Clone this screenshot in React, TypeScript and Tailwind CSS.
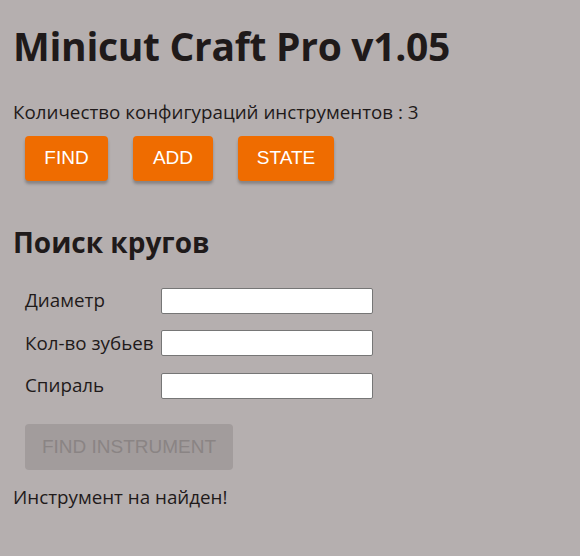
const fields = ["Диаметр", "Кол-во зубьев", "Спираль"];

function OrangeButton({ label, width }: { label: string; width: string }) {
  return (
    <button
      className={`h-[45px] ${width} rounded bg-[#ef6c00] text-white text-[19px] uppercase shadow-[0_3px_3px_rgba(0,0,0,0.25)] font-['Liberation_Sans',Arial,sans-serif]`}
    >
      {label}
    </button>
  );
}

export default function App() {
  return (
    <div className="min-h-[556px] w-full bg-[#b5afaf] px-[13px] text-[#1f1a1a] font-['Open_Sans',sans-serif]">
      <h1 className="pt-[20px] text-[39px] font-bold leading-[52px] tracking-[-0.3px]">
        Minicut Craft Pro v1.05
      </h1>
      <p className="mt-[27px] text-[18.8px] leading-[26px]">
        Количество конфигураций инструментов : 3
      </p>
      <div className="mt-[11px] flex gap-[25px] pl-[12px]">
        <OrangeButton label="Find" width="w-[83px]" />
        <OrangeButton label="Add" width="w-[80px]" />
        <OrangeButton label="State" width="w-[96px]" />
      </div>
      <h2 className="mt-[43px] text-[28px] font-bold leading-[36px]">Поиск кругов</h2>
      <div className="mt-[27px] flex flex-col gap-[15.5px] pl-[12px]">
        {fields.map((f) => (
          <div key={f} className="flex items-center h-[27px]">
            <label className="w-[136px] text-[18.8px] whitespace-nowrap">{f}</label>
            <input
              type="text"
              className="h-[26px] w-[212px] bg-white border border-[#767676] rounded-[2px]"
            />
          </div>
        ))}
      </div>
      <div className="mt-[25px] pl-[12px]">
        <button
          disabled
          className="h-[46px] w-[208px] rounded bg-[#a29c9c] text-[#8a8484] text-[19px] uppercase font-['Liberation_Sans',Arial,sans-serif]"
        >
          Find instrument
        </button>
      </div>
      <p className="mt-[14px] text-[18.8px] leading-[26px]">Инструмент на найден!</p>
    </div>
  );
}
